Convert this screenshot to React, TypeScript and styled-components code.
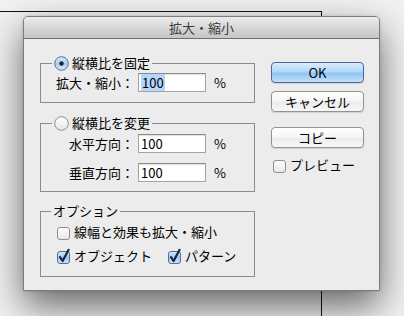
import React from 'react';
import styled, { createGlobalStyle } from 'styled-components';

const GlobalStyle = createGlobalStyle`
  html, body {
    margin: 0;
    padding: 0;
  }
  body {
    background: #f1f1f1;
    font-family: "Noto Sans CJK JP", "Noto Sans", sans-serif;
    color: #000;
  }
`;

const FONT = `"Noto Sans CJK JP", "Noto Sans", sans-serif`;

const Radio = ({ checked }: { checked?: boolean }) => (
    <svg width="15" height="15" viewBox="0 0 15 15">
        <defs>
            <linearGradient id={checked ? 'radioOn' : 'radioOff'} x1="0" y1="0" x2="0" y2="1">
                {checked ? (
                    <>
                        <stop offset="0" stopColor="#dcecfb" />
                        <stop offset="0.5" stopColor="#a9cff3" />
                        <stop offset="1" stopColor="#d4eafc" />
                    </>
                ) : (
                    <>
                        <stop offset="0" stopColor="#ffffff" />
                        <stop offset="0.5" stopColor="#f2f2f2" />
                        <stop offset="1" stopColor="#e4e4e4" />
                    </>
                )}
            </linearGradient>
        </defs>
        <circle cx="7.5" cy="7.5" r="6.8" fill={`url(#${checked ? 'radioOn' : 'radioOff'})`} stroke={checked ? '#5a6a9a' : '#8e8e8e'} strokeWidth="1" />
        {checked && <circle cx="7.5" cy="7.5" r="2.2" fill="#1b2233" />}
    </svg>
);

const Check = ({ checked }: { checked?: boolean }) => (
    <svg width="15" height="15" viewBox="0 0 15 15" style={{ overflow: 'visible' }}>
        <defs>
            <linearGradient id={checked ? 'boxOn' : 'boxOff'} x1="0" y1="0" x2="0" y2="1">
                {checked ? (
                    <>
                        <stop offset="0" stopColor="#d9ebfb" />
                        <stop offset="0.5" stopColor="#9ccaf3" />
                        <stop offset="1" stopColor="#cfe6fb" />
                    </>
                ) : (
                    <>
                        <stop offset="0" stopColor="#ffffff" />
                        <stop offset="0.5" stopColor="#f3f3f3" />
                        <stop offset="1" stopColor="#e6e6e6" />
                    </>
                )}
            </linearGradient>
        </defs>
        <rect x="1.5" y="2.5" width="12" height="12" rx="2.5" fill={`url(#${checked ? 'boxOn' : 'boxOff'})`} stroke={checked ? '#5a6a9a' : '#8e8e8e'} strokeWidth="1" />
        {checked && <path d="M4 8.2 L6.6 12 L12.6 0.8" fill="none" stroke="#1a2540" strokeWidth="2.2" strokeLinejoin="round" strokeLinecap="round" />}
    </svg>
);

const App = () => {
    return (
        <>
            <GlobalStyle />
            <Page>
                <Artboard />
                <Dialog>
                    <TitleBar>拡大・縮小</TitleBar>
                    <Body>
                        <LeftColumn>
                            <Group $pt={2} $pb={10} $mb={12}>
                                <Legend $indent={11}>
                                    <Radio checked />
                                    縦横比を固定
                                </Legend>
                                <FieldRow>
                                    <Label>拡大・縮小：</Label>
                                    <Field><Selected>100</Selected></Field>
                                    <Unit>%</Unit>
                                </FieldRow>
                            </Group>
                            <Group $pt={3} $pb={9} $mb={11}>
                                <Legend $indent={11}>
                                    <Radio />
                                    縦横比を変更
                                </Legend>
                                <FieldRow>
                                    <Label>水平方向：</Label>
                                    <Field>100</Field>
                                    <Unit>%</Unit>
                                </FieldRow>
                                <FieldRow $mt={10}>
                                    <Label>垂直方向：</Label>
                                    <Field>100</Field>
                                    <Unit>%</Unit>
                                </FieldRow>
                            </Group>
                            <Group $pt={4} $pb={11} $mb={0}>
                                <Legend $indent={10}>オプション</Legend>
                                <CheckRow>
                                    <CheckItem>
                                        <Check />
                                        線幅と効果も拡大・縮小
                                    </CheckItem>
                                </CheckRow>
                                <CheckRow $mt={6}>
                                    <CheckItem $width={111}>
                                        <Check checked />
                                        オブジェクト
                                    </CheckItem>
                                    <CheckItem>
                                        <Check checked />
                                        パターン
                                    </CheckItem>
                                </CheckRow>
                            </Group>
                        </LeftColumn>
                        <RightColumn>
                            <Button $primary $mb={8}>OK</Button>
                            <Button $mb={15}>キャンセル</Button>
                            <Button $mb={8}>コピー</Button>
                            <CheckItem $pl={1}>
                                <Check />
                                プレビュー
                            </CheckItem>
                        </RightColumn>
                    </Body>
                </Dialog>
            </Page>
        </>
    );
};

const Page = styled.div`
    position: relative;
    width: 404px;
    height: 316px;
    overflow: hidden;
    box-sizing: border-box;
    padding: 16px 0 0 23px;
    background: #f1f1f1;
`;

const Artboard = styled.div`
    position: absolute;
    left: -10px;
    top: 11px;
    width: 332px;
    height: 400px;
    box-sizing: border-box;
    border: 1px solid #111;
`;

const Dialog = styled.div`
    position: relative;
    z-index: 1;
    width: 357px;
    height: 275px;
    box-sizing: border-box;
    border: 1px solid #7c7c7c;
    border-radius: 5px 5px 0 0;
    background: #ececec;
    box-shadow: 0 15px 36px rgba(0, 0, 0, 0.58), 0 0 3px rgba(0, 0, 0, 0.15);
    display: flex;
    flex-direction: column;
`;

const TitleBar = styled.div`
    height: 21px;
    border-bottom: 1px solid #6f6f6f;
    border-radius: 4px 4px 0 0;
    background: linear-gradient(#ebebeb, #d4d4d4 60%, #c6c6c6);
    display: flex;
    align-items: center;
    justify-content: center;
    font-family: ${FONT};
    font-size: 13px;
    color: #3c3c3c;
`;

const Body = styled.div`
    display: flex;
    gap: 16px;
    padding: 16px 15px 0 16px;
`;

const LeftColumn = styled.div`
    width: 215px;
    display: flex;
    flex-direction: column;
`;

const RightColumn = styled.div`
    width: 93px;
    padding-top: 7px;
    display: flex;
    flex-direction: column;
`;

const Group = styled.fieldset<{ $pt: number; $pb: number; $mb: number }>`
    margin: 0 0 ${p => p.$mb}px;
    padding: ${p => p.$pt}px 0 ${p => p.$pb}px;
    border: 1px solid #8c8c8c;
    min-width: 0;
`;

const Legend = styled.legend<{ $indent: number }>`
    margin-left: ${p => p.$indent}px;
    padding: 0 2px;
    height: 16px;
    display: flex;
    align-items: center;
    gap: 3px;
    font-family: ${FONT};
    font-size: 13px;
    line-height: 16px;
    white-space: nowrap;
`;

const FieldRow = styled.div<{ $mt?: number }>`
    display: grid;
    grid-template-columns: 81px 68px auto;
    column-gap: 4px;
    align-items: center;
    margin: ${p => p.$mt ?? 0}px 0 0 12px;
`;

const Label = styled.span`
    font-family: ${FONT};
    font-size: 13px;
    line-height: 19px;
    text-align: right;
    white-space: nowrap;
`;

const Field = styled.div`
    height: 19px;
    box-sizing: border-box;
    border: 1px solid #a3a3a3;
    border-top-color: #8a8a8a;
    background: #fff;
    box-shadow: inset 0 1px 1px rgba(0, 0, 0, 0.12);
    padding-left: 2px;
    font-family: ${FONT};
    font-size: 13px;
    line-height: 17px;
`;

const Selected = styled.span`
    display: inline-block;
    background: #b4d5fc;
    padding: 0 1px;
`;

const Unit = styled.span`
    margin-left: 4px;
    font-family: ${FONT};
    font-size: 13px;
    line-height: 19px;
`;

const CheckRow = styled.div<{ $mt?: number }>`
    display: flex;
    align-items: center;
    margin: ${p => p.$mt ?? 0}px 0 0 15px;
`;

const CheckItem = styled.label<{ $width?: number; $pl?: number }>`
    display: inline-flex;
    align-items: center;
    gap: 3px;
    height: 18px;
    width: ${p => (p.$width ? `${p.$width}px` : 'auto')};
    padding-left: ${p => p.$pl ?? 0}px;
    font-family: ${FONT};
    font-size: 13px;
    line-height: 18px;
    white-space: nowrap;
`;

const Button = styled.button<{ $primary?: boolean; $mb: number }>`
    width: 93px;
    height: 21px;
    margin: 0 0 ${p => p.$mb}px;
    padding: 0;
    box-sizing: border-box;
    border-radius: 4px;
    border: 1px solid ${p => (p.$primary ? '#56629a' : '#929292')};
    background: ${p =>
        p.$primary
            ? 'linear-gradient(#d9ecfd, #b3d7f8 45%, #91c5f2 55%, #c2e1fb)'
            : 'linear-gradient(#ffffff, #f6f6f6 45%, #ececec 55%, #f7f7f7)'};
    box-shadow: 0 1px 1px rgba(0, 0, 0, 0.12);
    font-family: ${FONT};
    font-size: 13px;
    color: #000;
    line-height: 19px;
`;

export default App;
